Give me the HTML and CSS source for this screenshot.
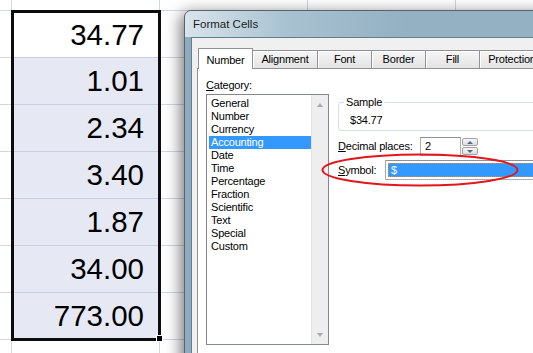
FILE: index.html
```html
<!DOCTYPE html>
<html lang="en">
<head>
  <meta charset="UTF-8">
  <title>Format Cells</title>
  <link rel="stylesheet" href="styles.css">
</head>
<body>
  <!-- Worksheet -->
  <div class="sheet">
    <div class="selection">
      <div class="cell active">34.77</div>
      <div class="cell">1.01</div>
      <div class="cell">2.34</div>
      <div class="cell">3.40</div>
      <div class="cell">1.87</div>
      <div class="cell">34.00</div>
      <div class="cell last">773.00</div>
    </div>
  </div>
  <div class="fill-handle"></div>

  <!-- Format Cells dialog -->
  <div class="dialog">
    <div class="titlebar">Format Cells</div>
    <div class="client">
      <div class="tabs">
        <div class="tab selected" style="width:55px">Number</div>
        <div class="tab" style="width:66px">Alignment</div>
        <div class="tab" style="width:55px">Font</div>
        <div class="tab" style="width:55px">Border</div>
        <div class="tab" style="width:55px">Fill</div>
        <div class="tab" style="width:66px">Protection</div>
      </div>
      <div class="panel">
        <div class="cat-col">
          <div class="label"><u>C</u>ategory:</div>
          <div class="listbox">
            <div class="items">
              <div class="item">General</div>
              <div class="item">Number</div>
              <div class="item">Currency</div>
              <div class="item current">Accounting</div>
              <div class="item">Date</div>
              <div class="item">Time</div>
              <div class="item">Percentage</div>
              <div class="item">Fraction</div>
              <div class="item">Scientific</div>
              <div class="item">Text</div>
              <div class="item">Special</div>
              <div class="item">Custom</div>
            </div>
            <div class="scrollbar">
              <span class="arrow up"></span>
              <span class="arrow down"></span>
            </div>
          </div>
        </div>
        <div class="num-col">
          <fieldset class="sample">
            <legend>Sample</legend>
            <div class="sample-value">$34.77</div>
          </fieldset>
          <div class="row decimals">
            <div class="row-label"><u>D</u>ecimal places:</div>
            <div class="textbox">2</div>
            <div class="spinner">
              <div class="spin"><span class="spin-arrow up"></span></div>
              <div class="spin"><span class="spin-arrow down"></span></div>
            </div>
          </div>
          <div class="row symbol">
            <div class="row-label"><u>S</u>ymbol:</div>
            <div class="combo"><div class="combo-value">$</div></div>
          </div>
        </div>
      </div>
    </div>
  </div>

  <!-- Red annotation -->
  <svg class="circle-mark" width="204" height="38" viewBox="0 0 204 38">
    <ellipse cx="100" cy="19" rx="97.5" ry="15.5" fill="none" stroke="#e2161b" stroke-width="2"/>
  </svg>
</body>
</html>
```

FILE: styles.css
```css
body {
  margin: 0;
  width: 533px;
  height: 353px;
  overflow: hidden;
  position: relative;
  background: #fff;
  font-family: "Liberation Sans", Arial, sans-serif;
}

/* Worksheet */
.sheet {
  height: 353px;
  display: grid;
  grid-template-columns: 12px 148px 1fr;
  grid-template-rows: 11px repeat(7, 47px) 1fr;
  background-color: #fff;
  background-image:
    linear-gradient(to right, transparent 147px, #d0d7e5 147px),
    linear-gradient(to bottom, transparent 46px, #d0d7e5 46px);
  background-size: 148px 100%, 100% 47px;
  background-position: 12px 0, 0 11px;
}

.selection {
  grid-column: 2;
  grid-row: 2 / 9;
  margin: -1px;
  border: 3px solid #0c0c0c;
  display: grid;
  grid-template-rows: 45px repeat(5, 47px) 1fr;
  background: #e6e9f4;
}

.cell {
  display: flex;
  align-items: center;
  justify-content: flex-end;
  padding-right: 14px;
  font-size: 29.5px;
  color: #000;
  border-bottom: 1px solid #c9cfe2;
}

.cell.active {
  background: #fff;
}

.cell.last {
  border-bottom: none;
}

.fill-handle {
  position: absolute;
  left: 156px;
  top: 335px;
  width: 5px;
  height: 5px;
  background: #000;
  border: 1px solid #fff;
}

/* Dialog window */
.dialog {
  position: absolute;
  left: 184px;
  top: 10px;
  width: 420px;
  height: 380px;
  border: 1px solid #56646d;
  border-radius: 7px 7px 0 0;
  background-color: #8eacbe;
  box-shadow: -3px 3px 16px rgba(0, 0, 0, 0.55);
  font-size: 11px;
  letter-spacing: -0.2px;
  color: #000;
}

.titlebar {
  height: 26px;
  line-height: 27px;
  padding-left: 8px;
  border-radius: 6px 6px 0 0;
  background-image: linear-gradient(to right, #d9e4eb, #a9c2d1 100px, #93b1c3 220px);
  font-size: 11.5px;
  letter-spacing: 0;
  color: #1b1b1b;
}

.client {
  margin-left: 6px;
  height: 100%;
  border-top: 1px solid #647d8c;
  border-left: 1px solid #647d8c;
  background: #f0f0f0;
  padding: 9px 0 0 5px;
}

.tabs {
  display: flex;
  align-items: flex-end;
  height: 21px;
  padding-left: 1px;
  position: relative;
  z-index: 1;
}

.tab {
  box-sizing: border-box;
  flex-shrink: 0;
  height: 18px;
  line-height: 17px;
  text-align: center;
  border: 1px solid #8f9296;
  border-bottom: none;
  margin-left: -1px;
  background: linear-gradient(#f5f5f5, #e4e4e4);
  box-shadow: inset 1px 1px 0 #fff;
}

.tab:first-child {
  margin-left: 0;
}

.tab.selected {
  height: 21px;
  line-height: 22px;
  margin-bottom: -1px;
  background: #fff;
  box-shadow: none;
}

.panel {
  display: flex;
  height: 300px;
  background: #fff;
  border: 1px solid #8f9296;
  border-right: none;
  padding: 10px 0 0 8px;
}

/* Category list */
.cat-col {
  width: 123px;
}

.label,
.row-label {
  line-height: 13px;
}

.listbox {
  box-sizing: border-box;
  margin-top: 2px;
  height: 251px;
  border: 1px solid #828790;
  display: flex;
}

.items {
  flex: 1;
  margin-left: 2px;
  padding-top: 2px;
}

.item {
  height: 13px;
  line-height: 13px;
  padding-left: 2px;
}

.item.current {
  background: #3399ff;
  color: #fff;
}

.scrollbar {
  width: 16px;
  border-left: 1px solid #e2e2e2;
  background: #eeeeee;
  display: flex;
  flex-direction: column;
  justify-content: space-between;
  align-items: center;
  padding: 8px 0 7px;
}

.arrow {
  width: 0;
  height: 0;
  border-left: 3.5px solid transparent;
  border-right: 3.5px solid transparent;
}

.arrow.up {
  border-bottom: 4px solid #a9a9a9;
}

.arrow.down {
  border-top: 4px solid #a9a9a9;
}

/* Number options */
.num-col {
  flex: 1;
  margin-left: 9px;
  margin-top: 17px;
}

.sample {
  margin: 0;
  border: 1px solid #d5dfe5;
  border-radius: 3px;
  padding: 5px 0 3px 11px;
}

.sample legend {
  padding: 0 2px;
  margin-left: -6px;
  line-height: 13px;
}

.sample-value {
  line-height: 13px;
}

.row {
  display: flex;
  align-items: center;
}

.decimals {
  margin-top: 6px;
  height: 19px;
}

.decimals .row-label {
  width: 82px;
}

.textbox {
  box-sizing: border-box;
  width: 41px;
  height: 19px;
  line-height: 17px;
  padding-left: 4px;
  border: 1px solid #abadb3;
  border-top-color: #8e9196;
}

.spinner {
  margin-left: 1px;
  width: 16px;
  height: 17px;
  display: flex;
  flex-direction: column;
  gap: 1px;
}

.spin {
  flex: 1;
  border: 1px solid #9ea2a8;
  border-radius: 2px;
  background: linear-gradient(#f6f6f6, #dedede);
  display: flex;
  align-items: center;
  justify-content: center;
}

.spin-arrow {
  width: 0;
  height: 0;
  border-left: 3px solid transparent;
  border-right: 3px solid transparent;
}

.spin-arrow.up {
  border-bottom: 3px solid #4d6a94;
}

.spin-arrow.down {
  border-top: 3px solid #4d6a94;
}

.symbol {
  margin-top: 4px;
}

.symbol .row-label {
  width: 47px;
}

.combo {
  flex: 1;
  height: 20px;
  box-sizing: border-box;
  border: 1px solid #abadb3;
  border-top-color: #8e9196;
  padding: 2px 0 2px 2px;
}

.combo-value {
  height: 14px;
  box-sizing: border-box;
  line-height: 12px;
  padding-left: 2px;
  background: #3399ff;
  color: #fff;
  border: 1px dotted #d98b3a;
}

.circle-mark {
  position: absolute;
  left: 320px;
  top: 151px;
}
```
